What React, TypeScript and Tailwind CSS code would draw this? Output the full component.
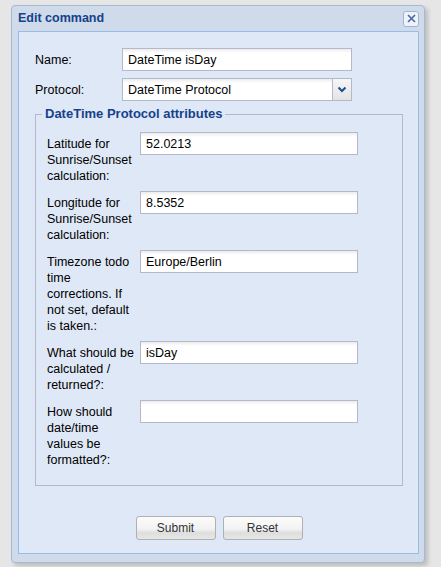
import { useState } from "react";

type Field = {
  label: string;
  value: string;
};

const fields: Field[] = [
  { label: "Latitude for Sunrise/Sunset calculation:", value: "52.0213" },
  { label: "Longitude for Sunrise/Sunset calculation:", value: "8.5352" },
  {
    label: "Timezone todo time corrections. If not set, default is taken.:",
    value: "Europe/Berlin",
  },
  { label: "What should be calculated / returned?:", value: "isDay" },
  { label: "How should date/time values be formatted?:", value: "" },
];

const inputCls =
  "h-[23px] border border-[#b5b8c8] bg-[linear-gradient(to_bottom,#ececec_0px,#ffffff_4px)] px-[5px] text-[12.5px] text-black outline-none";

function FormButton({ children }: { children: string }) {
  return (
    <button className="h-[24px] w-[80px] rounded-[3px] border border-[#b0b0b0] bg-[linear-gradient(to_bottom,#fbfbfb_0%,#f2f2f2_55%,#dedede_72%,#e6e6e6_100%)] text-[12px] text-[#333]">
      {children}
    </button>
  );
}

export default function App() {
  const [name, setName] = useState("DateTime isDay");

  return (
    <div className="h-[567px] w-[441px] bg-[#e6e6e6] pl-[11px] pt-[5px] font-['Liberation_Sans',Arial,sans-serif]">
      <div className="flex w-[414px] flex-col rounded-[4px] border border-[#a6b9cf] bg-[#cfdaea] px-[6px] pb-[8px] pr-[5px] shadow-[3px_3px_4px_rgba(0,0,0,0.18)]">
        {/* header */}
        <div className="flex h-[25px] items-center justify-between">
          <span className="text-[12.5px] font-bold text-[#15428b]">Edit command</span>
          <button className="flex h-[16px] w-[16px] items-center justify-center rounded-[3px] border border-[#9fb5d2] bg-[#eef3fa]">
            <svg width="11" height="11" viewBox="0 0 11 11">
              <path d="M2 2 L9 9 M9 2 L2 9" stroke="#4a68a3" strokeWidth="1.6" fill="none" />
            </svg>
          </button>
        </div>

        {/* body */}
        <div className="border border-[#99bbe8] bg-[#dfe8f6] pb-[13px] pl-[16px] pr-[15px] pt-[16px]">
          <div className="flex flex-col gap-[7px]">
            <div className="flex">
              <label className="w-[87px] pt-[4px] text-[12.5px] leading-4 text-black">Name:</label>
              <input
                className={`${inputCls} w-[230px]`}
                value={name}
                onChange={(e) => setName(e.target.value)}
              />
            </div>
            <div className="flex">
              <label className="w-[87px] pt-[4px] text-[12.5px] leading-4 text-black">Protocol:</label>
              <div className="flex h-[23px] w-[230px] border border-[#b5b8c8] bg-white">
                <div className="flex-1 bg-[linear-gradient(to_bottom,#ececec_0px,#ffffff_4px)] px-[5px] pt-[3px] text-[12.5px] leading-4 text-black">
                  DateTime Protocol
                </div>
                <div className="flex w-[19px] items-center justify-center border-l border-[#b5b8c8] bg-[linear-gradient(to_bottom,#f6f6f6,#e4e4e4)]">
                  <svg width="10" height="7" viewBox="0 0 10 7">
                    <path d="M1.5 1.5 L5 5 L8.5 1.5" stroke="#1f4b92" strokeWidth="2" fill="none" />
                  </svg>
                </div>
              </div>
            </div>
          </div>

          <fieldset className="mt-[5px] border border-[#b5b8c8] pb-[17px] pl-[11px] pr-[11px] pt-[10px]">
            <legend className="ml-[-5px] px-[3px] text-[13px] font-bold leading-4 text-[#15428b]">
              DateTime Protocol attributes
            </legend>
            <div className="flex flex-col gap-[7px]">
              {fields.map((f) => (
                <div key={f.label} className="flex items-start">
                  <label className="w-[93px] pr-[4px] pt-[4px] text-[12.5px] leading-4 text-black">
                    {f.label}
                  </label>
                  <input className={`${inputCls} w-[218px]`} defaultValue={f.value} />
                </div>
              ))}
            </div>
          </fieldset>

          <div className="mt-[30px] flex justify-center gap-[7px]">
            <FormButton>Submit</FormButton>
            <FormButton>Reset</FormButton>
          </div>
        </div>
      </div>
    </div>
  );
}
